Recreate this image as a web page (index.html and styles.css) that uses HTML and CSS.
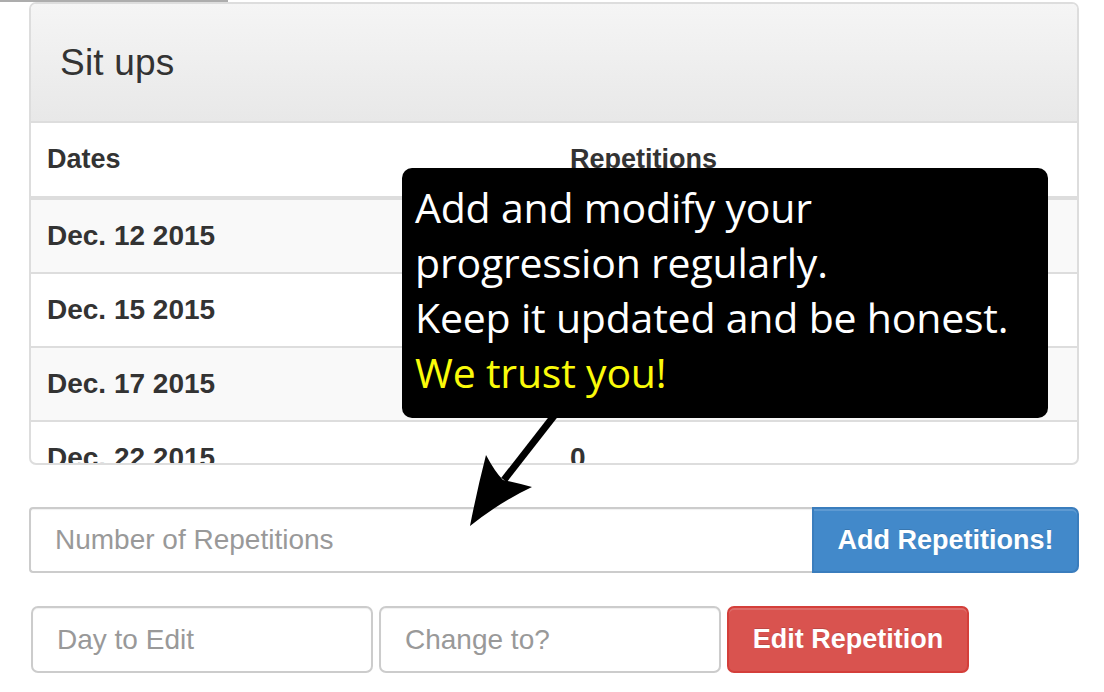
FILE: index.html
```html
<!DOCTYPE html>
<html>
<head>
<meta charset="utf-8">
<title>Sit ups</title>
<link rel="stylesheet" href="styles.css">
</head>
<body>
<div class="topbar"></div>
<div class="page">
  <div class="panel">
    <div class="panel-heading"><h3 class="panel-title">Sit ups</h3></div>
    <div class="table-wrap">
      <div class="trow thead"><div class="cell">Dates</div><div class="cell">Repetitions</div></div>
      <div class="trow striped"><div class="cell">Dec. 12 2015</div><div class="cell"></div></div>
      <div class="trow"><div class="cell">Dec. 15 2015</div><div class="cell"></div></div>
      <div class="trow striped"><div class="cell">Dec. 17 2015</div><div class="cell"></div></div>
      <div class="trow"><div class="cell">Dec. 22 2015</div><div class="cell">0</div></div>
    </div>
  </div>
  <div class="add-group">
    <input class="field field-main" type="text" placeholder="Number of Repetitions">
    <button class="btn btn-primary">Add Repetitions!</button>
  </div>
  <div class="edit-group">
    <input class="field field-small" type="text" placeholder="Day to Edit">
    <input class="field field-small" type="text" placeholder="Change to?">
    <button class="btn btn-danger">Edit Repetition</button>
  </div>
</div>
<div class="tip">
  <p class="tip-line">Add and modify your</p>
  <p class="tip-line">progression regularly.</p>
  <p class="tip-line">Keep it updated and be honest.</p>
  <p class="tip-line tip-accent">We trust you!</p>
</div>
<svg class="arrow" width="110" height="125" viewBox="0 0 110 125">
  <line x1="97" y1="2" x2="44" y2="70" stroke="#000" stroke-width="7"/>
  <path d="M10,116 Q17,80 26,45 Q35,62 43,70 Q57,73 72,77 Q40,92 10,116 Z" fill="#000"/>
</svg>
</body>
</html>
```
FILE: styles.css
```css
* { box-sizing: border-box; }
html, body { margin: 0; padding: 0; background: #fff; }
body {
  font-family: "Liberation Sans", Arial, sans-serif;
  color: #333;
  width: 1104px;
  height: 692px;
  overflow: hidden;
  position: relative;
}
.topbar {
  width: 228px;
  height: 2px;
  background: #adadad;
}
.page {
  padding-left: 29px;
}
.panel {
  width: 1050px;
  border: 2px solid #dddddd;
  border-radius: 7px;
  overflow: hidden;
  background: #fff;
}
.panel-heading {
  height: 119px;
  border-bottom: 2px solid #dddddd;
  background: linear-gradient(to bottom, #f5f5f5 0%, #e8e8e8 100%);
  display: flex;
  align-items: center;
  padding-left: 29px;
}
.panel-title {
  margin: 0;
  font-size: 37px;
  font-weight: normal;
  color: #333;
  letter-spacing: 0.2px;
}
.table-wrap {
  height: 340px;
  overflow: hidden;
}
.trow {
  display: grid;
  grid-template-columns: 1fr 1fr;
  align-items: center;
  height: 74px;
  border-bottom: 2px solid #dddddd;
  font-size: 28px;
  font-weight: bold;
}
.trow.thead {
  height: 77px;
  border-bottom: 4px solid #dddddd;
  font-size: 27px;
}
.trow.striped { background: #f9f9f9; }
.cell {
  padding-left: 16px;
}
.add-group {
  display: flex;
  margin-top: 42px;
  height: 66px;
  width: 1050px;
}
.field {
  height: 100%;
  border: 2px solid #cccccc;
  background: #fff;
  font-family: "Liberation Sans", Arial, sans-serif;
  font-size: 28px;
  color: #555;
  padding: 0 0 0 24px;
  outline: none;
  box-shadow: inset 0 1px 1px rgba(0,0,0,0.06);
}
.field::placeholder { color: #999999; }
.field-main {
  width: 783px;
  border-radius: 4px 0 0 4px;
  border-right: none;
}
.btn {
  height: 100%;
  font-family: "Liberation Sans", Arial, sans-serif;
  font-size: 27px;
  font-weight: bold;
  color: #fff;
  border: 2px solid transparent;
  text-shadow: 0 -1px 0 rgba(0,0,0,0.15);
  box-shadow: inset 0 2px 0 rgba(255,255,255,0.15);
  padding: 0;
}
.btn-primary {
  width: 267px;
  background: #4289ca;
  border-color: #3a7dbd;
  border-radius: 0 7px 7px 0;
}
.edit-group {
  display: flex;
  gap: 6px;
  margin-top: 33px;
  height: 67px;
  padding-left: 2px;
}
.field-small {
  width: 342px;
  border-radius: 7px;
}
.btn-danger {
  width: 242px;
  background: #d9534f;
  border-color: #d43f3a;
  border-radius: 7px;
}
.tip {
  position: absolute;
  left: 402px;
  top: 168px;
  width: 646px;
  height: 250px;
  background: #000;
  border-radius: 10px;
  padding: 12px 13px;
  font-family: "Open Sans", "Noto Sans", sans-serif;
  font-size: 41px;
  line-height: 55px;
  letter-spacing: -0.2px;
  color: #fff;
}
.tip-line { margin: 0; white-space: nowrap; }
.tip-accent { color: #fafa0a; }
.arrow {
  position: absolute;
  left: 460px;
  top: 410px;
}
```
